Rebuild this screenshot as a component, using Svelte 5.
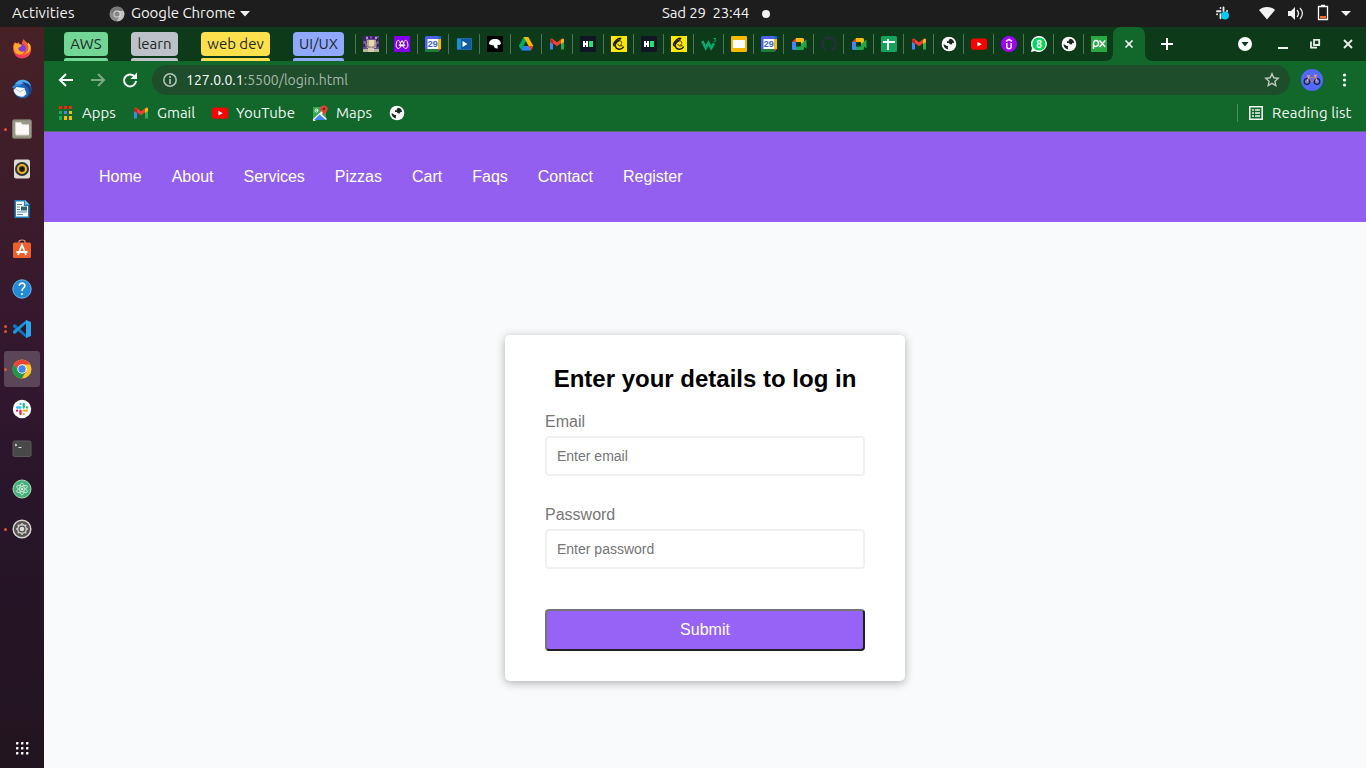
<script>
  const groups = [
    { name: 'AWS', color: '#72d697', width: 44, gap: 23, ls: 0.1 },
    { name: 'learn', color: '#bdc1c9', width: 47, gap: 23, ls: 0 },
    { name: 'web dev', color: '#fde04b', width: 69, gap: 23, ls: 0 },
    { name: 'UI/UX', color: '#90a8ff', width: 51, gap: 11, ls: 0 }
  ];
  const tabs = [
    'pixel', 'aurora', 'calendar', 'video', 'bird', 'drive', 'gmail', 'hacker',
    'chimp', 'hacker', 'chimp', 'w3', 'slides', 'calendar', 'meet', 'github', 'meet',
    'sheets', 'gmail', 'globe', 'youtube', 'udemy', 'whatsapp', 'globe', 'px'
  ];
  const dock = [
    { icon: 'firefox' }, { icon: 'thunderbird' }, { icon: 'files', dots: 1 },
    { icon: 'rhythmbox' }, { icon: 'writer' }, { icon: 'software' }, { icon: 'help' },
    { icon: 'vscode', dots: 2 }, { icon: 'chrome', dots: 1, active: true }, { icon: 'slack' },
    { icon: 'terminal' }, { icon: 'atom' }, { icon: 'settings', dots: 1 }
  ];
  const bookmarks = [
    { icon: 'apps', label: 'Apps', w: 76 },
    { icon: 'gmail', label: 'Gmail', w: 79 },
    { icon: 'youtube', label: 'YouTube', w: 100 },
    { icon: 'maps', label: 'Maps', w: 77 },
    { icon: 'globe', label: '', w: 16 }
  ];
  const links = ['Home', 'About', 'Services', 'Pizzas', 'Cart', 'Faqs', 'Contact', 'Register'];
  const spokes = [0, 45, 90, 135];
</script>

{#snippet small(name)}
  <svg width="16" height="16" viewBox="0 0 16 16">
    {#if name === 'pixel'}
      <path fill="#6b4b96" d="M0 0h16v16H0z" /><path fill="#42206f" d="M0 0h3v5H0zM5 0h2v3H5zM9 0h3v3H9zM13 2h3v4h-3zM0 8h2v3H0zM14 8h2v3h-2z" /><path fill="#a89bb5" d="M3 1h2v2H3zM12 1h2v2h-2z" />
      <path fill="#b5a794" d="M4 4h9v8H4z" /><path fill="#e3dcad" d="M6 4h5v6H6z" />
      <path fill="#b7b49e" d="M0 13h16v3H0z" /><path fill="#d5d0b4" d="M5 12h6v4H5z" /><path d="M1 5l3 5 3 2M15 5l-3 5-3 2" fill="none" stroke="#8c7b86" />
    {:else if name === 'aurora'}
      <path fill="#8500ef" d="M0 0h16v16H0z" />
      <g fill="none" stroke="#fff" stroke-width="1"><path d="M3 11.8C1.600 11 2 7 3 5.300c.8-1.300 2-1.300 2.700 0 1 1.700 1.300 4.500.3 6.200-.8 1.200-2 1.200-3 .3M13 11.800c1.400-.8 1-4.800 0-6.500-.8-1.300-2-1.300-2.700 0-1 1.700-1.300 4.500-.3 6.200.8 1.200 2 1.200 3 .3M5 10l3-5.500L11 10M6 6.500l2 4 2-4" /></g>
    {:else if name === 'calendar'}
      <rect width="16" height="16" rx="1.500" fill="#4b63e8" /><path fill="#fbbc04" d="M13 3h3v10h-3z" /><path fill="#1967d2" d="M13 0h2l1 1v2h-3z" />
      <path fill="#188038" d="M0 13h13v3H1l-1-1z" /><path fill="#fff" d="M2.500 3H13v10H2.500z" /><path fill="#ea4335" d="M13 13h3l-3 3z" /><path fill="#0d3b19" d="M16 13v3h-3z" />
      <text x="7.800" y="11.300" text-anchor="middle" font-size="9" font-weight="700" fill="#3367d6">29</text>
    {:else if name === 'video'}
      <rect y="2" x="1" width="15" height="12" rx="1" fill="#176caf" /><path fill="#1a91cf" d="M1 3h4v10H1z" /><path fill="#0f5b9d" d="M5 3h10v10H5z" /><path fill="#fff" d="M6.500 5l5 3-5 3z" />
    {:else if name === 'bird'}
      <path fill="#000" d="M0 0h16v16H0z" /><path fill="#fff" d="M2 8c0-3 2-5 6-5 4 .1 5.500 1.800 6 4.700L12.300 9l-1.900-.3.4 3.800C8 12.800 6.600 11 6.800 9.400L4 9z" />
    {:else if name === 'drive'}
      <path fill="#0da960" d="M5.600 1h2L8 5 3.300 14 .8 10z" /><path fill="#ffba00" d="M5.600 1h4.700l5 9h-4.600z" /><path fill="#2684fc" d="M5.400 10h5.400l-2 4.500H3.100z" /><path fill="#2684fc" d="M8 10.500h5v4H8z" /><path fill="#ea4335" d="M10.200 10h5.100L13 14.500z" />
    {:else if name === 'gmail'}
      <path fill="#4285f4" d="M1 4v9.500h3V7z" /><path fill="#34a853" d="M12 7v6.500h3V4z" /><path fill="#ea4335" d="M1 3l2-.5 5 3.800 5-3.800 2 .5v2L8 10.200 1 5z" /><path fill="#fbbc04" d="M12 4l2-1.500 1 1V6l-3 2z" /><path fill="#c5221f" d="M1 3l3 1v4L1 6z" />
    {:else if name === 'hacker'}
      <path fill="#101624" d="M0 0h16v16H0z" /><path fill="#fff" d="M3 5h2v2h1V5h2v6H6V9H5v2H3z" /><path fill="#20e66e" d="M9 5h4v6H9z" />
    {:else if name === 'chimp'}
      <path fill="#ffe800" d="M0 0h16v16H0z" /><path fill="none" stroke="#181711" stroke-width="1.400" d="M10.300 2.600C7.200 1.200 3 5.700 2.500 8.600c.2 1.200 1 1.400 1.800 1.300.7 4 6 4.700 8.400.7" /><path fill="#181711" d="M3 8c1-3 4-5 7-5L6 7l-2 3z" /><path d="M7.200 5.500c2-1.400 3.700-.7 3.500 2.200M6.500 8l2 2 3-.3M10 8v1" stroke="#181711" stroke-width=".9" fill="none" />
    {:else if name === 'w3'}
      <path d="M1.300 5l3.400 7 2.700-5.200 2.800 5.200L13 7.300" fill="none" stroke="#04aa6d" stroke-width="2.600" /><path d="M12.500 2.500h2.400l-1.100 1.600c2 .3 1 2.100-1.200 1.500" fill="none" stroke="#04aa6d" />
    {:else if name === 'slides'}
      <rect width="16" height="16" rx="1.300" fill="#f7b900" /><path fill="#fff" d="M2 4h12v8H2z" />
    {:else if name === 'meet'}
      <path fill="#ea4335" d="M1 6l4-4v4z" /><path fill="#fbbc04" d="M5 2h7l1 1v4l-3 2V6H5z" /><path fill="#4285f4" d="M1 6h4v8H2l-1-1z" /><path fill="#20a84a" d="M5 10.500h5V8l5.500-4.500v9L13 10.500V13l-1 1H5z" />
    {:else if name === 'github'}
      <path fill="#24313b" d="M8 0a8 8 0 0 0-2.500 15.600v-2.200C3 14 2.500 12 2.500 12c1 0 1.400 2 3.200 1.100.1-.7.4-1 .7-1.300C3.800 11.400 2.600 10 2.600 7.800c0-1 .4-1.900 1-2.500-.2-.8-.1-1.700.2-2.200 1 0 1.700.6 2.300 1a9 9 0 0 1 4 0c1.500-1 2.200-1 2.200-1 .4 1 .3 1.700.2 2.100.7.8 1 1.600 1 2.600 0 2.400-1.500 3.800-3.900 4 .5.500.8 1 .8 2v1.800A8 8 0 0 0 8 0" />
    {:else if name === 'sheets'}
      <rect width="16" height="16" rx="1.500" fill="#16a35b" /><path d="M2 6h12M7 3v11" stroke="#fff" stroke-width="2" />
    {:else if name === 'globe'}
      <circle cx="8" cy="8" r="7.300" fill="#fff" /><path fill="#1b2721" d="M2.500 8l3.300 1.900 1.500.1-.5 1.500.2 2C4.500 13 2.500 11 2.500 8M6 5.300h1.800V3.700l1.700-.9c2.100.6 3.400 2.200 3.700 3.900l-1.700.2-.8 1.500-2-.2-.8-1.100L6 7z" />
    {:else if name === 'youtube'}
      <rect y="2.500" width="16" height="11.300" rx="2.500" fill="#f00" /><path fill="#fff" d="M6.400 5.800l4.300 2.400-4.300 2.400z" />
    {:else if name === 'udemy'}
      <circle cx="8" cy="8" r="8" fill="#a100ff" /><path d="M5.800 7v3.500c0 3 4.400 3 4.400 0V7M5 5.300l3-2 3 2" fill="none" stroke="#fff" stroke-width="1.500" />
    {:else if name === 'whatsapp'}
      <path fill="#fff" d="M8 0a8 8 0 1 1-4 15L0 16l1-4A8 8 0 0 1 8 0" /><circle cx="8" cy="8" r="6.600" fill="#00d957" /><text x="8" y="11.600" text-anchor="middle" font-size="10" font-weight="700" fill="#fff">8</text>
    {:else if name === 'px'}
      <path fill="#28a745" d="M0 0h16v16H0z" /><path d="M2.500 13V7.500c0-4.300 5-3.800 5 0 0 3.300-3.500 3.400-5 2M8.500 4.500l5.800 6.500M14.300 4.500L8.500 11" fill="none" stroke="#fff" stroke-width="1.500" />
    {:else if name === 'apps'}
      <path fill="#ff1d0b" d="M2 1h3v3H2zM7 1h3v3H7zM12 1h3v3h-3z" /><path fill="#18a960" d="M2 6h3v3H2zM2 11h3v4H2z" /><path fill="#4285f4" d="M7 6h3v3H7z" /><path fill="#fbbc04" d="M12 6h3v3h-3zM12 11h3v4h-3zM7 11h3v4H7z" />
    {:else if name === 'maps'}
      <path fill="#34a853" d="M1 2h9l4 4v8L1 15z" /><path fill="#fff" d="M1 14L12 4l1.400 1.400L3 16H1z" /><path fill="#4285f4" d="M2 15l6-6 6 6z" /><path fill="#fff" d="M7 9l1.300-1.300L15 14l-1 1z" /><path fill="#ea4335" d="M8.200 4C8.200-.8 15.700-.8 15.700 4c0 2-2.500 3-3.500 7-.7-4-4-5-4-7" /><circle cx="12" cy="4" r="1.400" fill="#8c1a12" /><path d="M3 6c0-2 2-3 3-1M3 6c1 2 3 1 3-.5H4.500" fill="none" stroke="#fff" />
    {/if}
  </svg>
{/snippet}

{#snippet large(name)}
  <svg width="20" height="20" viewBox="0 0 20 20">
    {#if name === 'firefox'}
      <path fill="#ff5734" d="M1 8c0-2 1-4 2.200-5l.8 2L7 3c0 1.800 1.500 2.500 3 3 0-3 .4-4.700 2-6 0 2 3 3 3.800 5.200V3.600C20 7 20 13 16.800 16.600 11 22 .8 18.800 1 8" /><path fill="#ffc431" d="M12 0c-.2 3 4.200 4 4.500 8.500.3 3-2 6-5 6.500 5 0 8-4 6.800-9L16 3.600v1.900C15 3.500 12 2.500 12 0" /><circle cx="9.700" cy="9.500" r="4.400" fill="#823bdc" /><path fill="#ffac25" d="M3 4c2 0 3 1.400 5 1.600 2 0 2 2 0 2.300-1 .2-2 .8-1.700 1.800.6 3 4 3.800 6.200 2.300-2 5.500-8 3.800-10 .3C1.500 9 2 6 3 4" /><path fill="#fb326b" d="M2 13.500c4 4 11 4 15 .5C14 21.500 4.500 21 2 13.500" />
    {:else if name === 'thunderbird'}
      <circle cx="10.500" cy="10" r="9.200" fill="#1b62b7" /><path fill="#55a7ee" d="M3 5C7-1.500 17-.5 19 7c-4-4-9-3-13 0z" /><path fill="#143f84" d="M14 7c4 2 4 8 1 11 8-5 3-15-5-15z" /><path fill="#f2f8fb" d="M1.500 11l3-3 8 1 2 6-3 2.500c-4 1-9-1.500-10-6.500" /><path d="M3 9.500l5 3.500 5-3" stroke="#9ebbd0" stroke-width=".8" fill="none" /><path fill="#2f86d3" d="M0 9c1-4 7-5 10-2-3-.5-5 0-7 2z" />
    {:else if name === 'files'}
      <rect x=".5" y=".8" width="19" height="18.500" rx="1.500" fill="#9a9886" stroke="#77756c" /><path fill="#faf9f6" d="M4 4h5l1.500 1.500H17V16H4z" /><path d="M3.500 15V3.500H9l1 1.500M3.500 16h13" stroke="#d7d4cc" fill="none" />
    {:else if name === 'rhythmbox'}
      <rect x="2" y=".5" width="16" height="19" rx="2" fill="#dddcd5" /><circle cx="10" cy="10" r="7" fill="#30343a" /><circle cx="10" cy="10" r="4" fill="none" stroke="#edb817" stroke-width="2" /><circle cx="10" cy="10" r="2" fill="#151515" />
    {:else if name === 'writer'}
      <path fill="#1c81b8" d="M2.500 1H13l4.500 4.500V19h-15z" /><path fill="#fff" d="M4 2.500h8V7h4v10.500H4z" /><path fill="#79c5e6" d="M13 1l4.500 4.500H13z" /><path d="M5 5.500h5M5 8h3M5 10.500h3M5 13h10M5 15.500h6" stroke="#4689b0" /><path fill="#31617b" d="M9 7.500h6v4H9z" />
    {:else if name === 'software'}
      <path d="M7 4V2.500C7 .5 13 .5 13 2.500V4" fill="none" stroke="#dc9985" stroke-width="1.200" /><rect x="1" y="3.500" width="18" height="15.500" rx="1.500" fill="#ed602d" /><path d="M6 16l4-10 4 10M4.500 13h11" fill="none" stroke="#fff" stroke-width="1.800" />
    {:else if name === 'help'}
      <circle cx="10" cy="10" r="9.200" fill="#238ad8" stroke="#69b9ec" /><path d="M7.200 7c0-4 6-3.500 5.700-.3C12.800 9 10 9 10 12M10 14v2" fill="none" stroke="#fff" stroke-width="1.600" />
    {:else if name === 'vscode'}
      <path fill="#0876c2" d="M1 6l2-1 12.500 12-1 2L1 8z" /><path fill="#1b94dc" d="M1 14l2 1L15.500 3l-1-2L1 12z" /><path fill="#29a6ec" d="M14 1l5 2v14l-5 2z" /><path fill="#32162b" d="M14 6v8l-5-4z" />
    {:else if name === 'chrome'}
      <circle cx="10" cy="10" r="9.500" fill="#fbc62c" /><path fill="#ea4335" d="M10 10H6L1.800 5.200C5-.8 14.800-1 18.300 5.500H10z" /><path fill="#23944b" d="M1.800 5.200C-2.500 12 3 19 10 19.500l4-7.200L10 10H6z" /><circle cx="10" cy="10" r="4.700" fill="#fff" /><circle cx="10" cy="10" r="3.700" fill="#4285f4" />
    {:else if name === 'slack'}
      <circle cx="10" cy="10" r="9.200" fill="#fff" /><g fill="none" stroke-width="2.300" stroke-linecap="round"><path d="M8.500 5v.1M5 8.500h3.500" stroke="#36c5f0" /><path d="M11.700 5v3.500M15 8.500h.1" stroke="#2eb67d" /><path d="M11.700 11.700H15M11.700 15v.1" stroke="#ecb22e" /><path d="M8.500 11.700V15M5 11.700h.1" stroke="#e01e5a" /></g>
    {:else if name === 'terminal'}
      <rect x="1" y="2" width="18" height="15.500" rx="1.500" fill="#484848" stroke="#5a5a5a" /><path d="M3 5l2 1-2 1M6.500 8.500h3" fill="none" stroke="#ddd" stroke-width="1" />
    {:else if name === 'atom'}
      <circle cx="10" cy="10" r="9" fill="#46af80" stroke="#aad9a0" /><g fill="none" stroke="#d5ead1" stroke-width=".8">{#each [0, 60, 120] as angle}<ellipse cx="10" cy="10" rx="2.300" ry="6" transform={`rotate(${angle} 10 10)`} />{/each}</g><circle cx="10" cy="10" r="1" fill="#fff" />
    {:else if name === 'settings'}
      <circle cx="10" cy="10" r="8.800" fill="#54524f" stroke="#d7d5d2" stroke-width="1.500" />{#each spokes as angle}<path d="M10 4v12" stroke="#c7c5c1" stroke-width="1.700" transform={`rotate(${angle} 10 10)`} />{/each}<circle cx="10" cy="10" r="4.300" fill="#54524f" stroke="#ccc" stroke-width="1.500" /><circle cx="10" cy="10" r="2.300" fill="#ddd" />
    {/if}
  </svg>
{/snippet}

<div class="desktop">
  <header class="system">
    <div class="system-left"><span class="activities">Activities</span>
      <svg class="app-icon" width="16" height="16" viewBox="0 0 16 16"><circle cx="8" cy="8" r="7.500" fill="#8b8b8b" /><path fill="#777" d="M1.200 4.600C4-.7 12-.6 14.600 4.500H8L5 10z" /><path fill="#c3c3c3" d="M8 5h6.800c2 5-1.800 10.400-7 10.300L11 9z" /><circle cx="8" cy="8" r="3.600" fill="#ddd" /><circle cx="8" cy="8" r="2.600" fill="#858585" /></svg>
      <span class="app-name">Google Chrome</span><svg width="10" height="6" viewBox="0 0 10 6"><path fill="#f1f1f1" d="M0 0h10L5 5.500z" /></svg>
    </div>
    <div class="clock"><span>Sad 29&nbsp; 23:44</span><i></i></div>
    <svg class="tray" width="152" height="27" viewBox="0 0 152 27">
      <g stroke="#e7e7e7" stroke-width="1.900" stroke-linecap="round"><path d="M6.500 8v.1M3 11.200h3.500M9.500 7.500v3.500M13 11h.1M3 14.300h.1M6.500 14.300v4" /></g><circle cx="11" cy="15.500" r="4" fill="#00c9f2" />
      <path fill="#f2f2f2" d="M45 10c4-4 12-4 16 0l-8 9.500z" /><path fill="#f2f2f2" d="M74 11h3l4-4v13l-4-4h-3z" /><path d="M83 10q3 3.300 0 7M86 8q5 5.300 0 11" fill="none" stroke="#e8e8e8" stroke-width="1.300" />
      <path d="M104.500 6.500h9v13h-9zM107 5.500h4" fill="none" stroke="#fff" stroke-width="1.300" /><path fill="#f46b2c" d="M106 16h6v2.500h-6z" /><path fill="#f2f2f2" d="M127 11h10l-5 5z" />
    </svg>
  </header>

  <aside class="dock">
    {#each dock as item}
      <div class="dock-item" class:active={item.active}>
        <span class="marks">{#each Array(item.dots || 0) as _}<i></i>{/each}</span>{@render large(item.icon)}
      </div>
    {/each}
    <svg class="launcher" width="14" height="14" viewBox="0 0 14 14"><g fill="#fff">{#each [1, 6, 11] as x}{#each [1, 6, 11] as y}<rect {x} {y} width="2.400" height="2.400" rx=".4" />{/each}{/each}</g></svg>
  </aside>

  <main>
    <section class="strip">
      {#each groups as group}<div class="group" style={`width:${group.width}px;margin-right:${group.gap}px;--tone:${group.color};letter-spacing:${group.ls}px`}><span>{group.name}</span><i></i></div>{/each}
      {#each tabs as tab, index}<div class="tab" class:wide={index < 8}>{@render small(tab)}</div>{/each}
      <div class="current"><svg width="48" height="34" viewBox="0 0 48 34"><path fill="#12672b" d="M0 34c5 0 8-3 8-8V8c0-5 3-8 8-8h16c5 0 8 3 8 8v18c0 5 3 8 8 8z" /><path d="M20.500 13.500l7 7m0-7l-7 7" stroke="#fff" stroke-width="1.700" /></svg></div>
      <svg class="window-tools" width="213" height="34" viewBox="0 0 213 34"><path d="M8 17h12M14 11v12" stroke="#fff" stroke-width="2" /><circle cx="92" cy="17" r="7" fill="#fff" /><path fill="#0d3b19" d="M88.500 15h7l-3.500 4.500z" /><path d="M125 21h10M191 13l8 8m0-8l-8 8" stroke="#ebf0ed" stroke-width="1.800" /><path d="M161 12.800h5.200V18H161zM158 14.500v6.200h6" fill="none" stroke="#e5ece7" stroke-width="1.800" /></svg>
    </section>

    <section class="toolbar">
      <svg width="108" height="34" viewBox="0 0 108 34"><path d="M29 19H16m6-6l-6 6 6 6" fill="none" stroke="#fff" stroke-width="2" /><path d="M47 19h13m-6-6l6 6-6 6" fill="none" stroke="#7eaa8a" stroke-width="2" /><path d="M90.500 15.500A6 6 0 1 0 92 20" fill="none" stroke="#fff" stroke-width="2" /><path fill="#fff" d="M86.500 18H93v-6.500z" /></svg>
      <div class="address">
        <svg width="14" height="14" viewBox="0 0 14 14"><circle cx="7" cy="7" r="6.200" fill="none" stroke="#b6c5ba" stroke-width="1.500" /><path d="M7 6v5M7 3v2" stroke="#b6c5ba" stroke-width="1.700" /></svg>
        <span><b>127.0.0.1</b>:5500/login.html</span>
        <svg class="star" width="16" height="16" viewBox="0 0 16 16"><path d="M8 1.800l1.800 4 4.400.5-3.300 2.900.9 4.300L8 11.300l-3.800 2.200.9-4.300-3.300-2.900 4.400-.5z" fill="none" stroke="#bdcabf" stroke-width="1.400" /></svg>
      </div>
      <svg width="76" height="34" viewBox="0 0 76 34"><circle cx="22" cy="19" r="11" fill="#5368ff" /><g fill="#6e7cc9" stroke="#172040" stroke-width="1.200"><circle cx="17" cy="20.500" r="2.800" /><circle cx="27" cy="20.500" r="2.800" /></g><path d="M19 15.500l-2 5M25 14.500l2 6" stroke="#d9c0c4" /><path d="M19 17l3 4 4-5z" fill="none" stroke="#e0785b" /><path d="M17 15h3M24 14.500h3" fill="none" stroke="#e7a05b" stroke-width="1.300" /><g fill="#fff"><circle cx="54.500" cy="14" r="1.600" /><circle cx="54.500" cy="19" r="1.600" /><circle cx="54.500" cy="24" r="1.600" /></g></svg>
    </section>

    <section class="bookmarks">
      {#each bookmarks as mark}<div class="bookmark" style={`width:${mark.w}px`}>{@render small(mark.icon)}{#if mark.label}<span>{mark.label}</span>{/if}</div>{/each}
      <div class="reading"><svg width="14" height="14" viewBox="0 0 14 14"><path d="M.8.8h12.400v12.400H.8z" fill="none" stroke="#eff5f0" stroke-width="1.600" /><path d="M3 4h2m1 0h5M3 7h2m1 0h5M3 10h2m1 0h5" stroke="#eff5f0" stroke-width="1.300" /></svg><span>Reading list</span></div>
    </section>

    <nav>{#each links as link}<a href="#top">{link}</a>{/each}</nav>
    <div class="page">
      <form onsubmit={(event) => event.preventDefault()}>
        <h2>Enter your details to log in</h2>
        <label for="email">Email</label><input id="email" type="email" placeholder="Enter email" />
        <label for="password">Password</label><input id="password" type="password" placeholder="Enter password" />
        <button>Submit</button>
      </form>
    </div>
  </main>
</div>

<style>
  :global(body) { margin: 0; overflow: hidden; }
  * { box-sizing: border-box; }
  svg { display: block; flex: none; }
  .desktop { width: 1366px; height: 768px; display: grid; grid-template: 27px 741px / 44px 1322px; font: 15px "Ubuntu", "Noto Sans", sans-serif; overflow: hidden; }
  .system { grid-column: 1 / 3; display: grid; grid-template-columns: 662px 108px 1fr; background: #1d1d1d; color: #f2f2f2; height: 27px; }
  .system-left { display: flex; align-items: center; padding-left: 12px; white-space: nowrap; }
  .system span { line-height: 17px; padding-bottom: 2px; }
  .activities { width: 97px; letter-spacing: .1px; }
  .app-icon { margin-right: 6px; }
  .app-name { width: 109px; letter-spacing: -.05px; }
  .clock { display: flex; align-items: center; justify-content: space-between; white-space: nowrap; letter-spacing: -.15px; }
  .clock i { width: 8px; height: 8px; border-radius: 50%; background: #f2f2f2; }
  .tray { justify-self: end; }
  .dock { padding-top: 2px; background: linear-gradient(#472126, #32172f 46%, #28152a 65%, #22141e); display: flex; flex-direction: column; align-items: center; }
  .dock-item { height: 36px; width: 36px; margin: 2px 0; display: flex; align-items: center; border-radius: 3px; flex: none; }
  .dock-item.active { background: #5b4558; }
  .marks { width: 8px; display: flex; flex-direction: column; gap: 2px; }
  .marks i { width: 3px; height: 3px; border-radius: 50%; background: #e95420; }
  .launcher { margin: auto 0 13px; }
  main { background: #f9fafc; min-width: 0; }
  .strip { height: 34px; background: #0d3b19; padding-left: 20px; display: flex; overflow: hidden; }
  .group { height: 34px; padding-top: 5px; flex: none; color: #202a24; text-align: center; white-space: nowrap; }
  .group span { display: block; height: 24px; line-height: 24px; border-radius: 4px; background: var(--tone); }
  .group i { display: block; height: 3px; margin-top: 2px; background: var(--tone); border-radius: 2px 2px 0 0; }
  .tab { width: 30px; height: 20px; margin-top: 7px; padding-left: 7px; display: flex; align-items: center; border-left: 1px solid #4e7356; flex: none; }
  .tab.wide { width: 31px; }
  .tab text { font-family: "Liberation Sans", sans-serif; }
  .current { width: 48px; margin-left: -8px; flex: none; }
  .window-tools { flex: none; }
  .toolbar { height: 34px; background: #12672b; display: flex; }
  .address { width: 1138px; height: 30px; margin-top: 4px; border-radius: 15px; background: #1e4d2b; color: #a6b8aa; display: flex; align-items: center; padding: 0 10px 0 11px; font-size: 14px; }
  .address span { margin-left: 9px; }
  .address b { color: #fff; font-weight: 400; }
  .star { margin-left: auto; }
  .bookmarks { height: 37px; background: #12672b; color: #f0f6f1; display: flex; align-items: center; padding: 0 14px 0 13px; border-bottom: 1px solid #5a6f68; }
  .bookmark, .reading { height: 18px; display: flex; align-items: center; white-space: nowrap; }
  .bookmark span, .reading span { margin-left: 8px; line-height: 17px; padding-bottom: 2px; }
  .bookmark:first-child span { margin-left: 9px; }
  .reading { margin-left: auto; border-left: 1px solid #4a8a5c; padding-left: 11px; width: 115px; letter-spacing: .1px; }
  .reading span { margin-left: 9px; }
  nav { height: 90px; padding: 0 0 1px 55px; background: #935ff1; display: flex; align-items: center; gap: 30px; font: 16px "Liberation Sans", sans-serif; }
  nav a { color: #fff; text-decoration: none; line-height: 18px; }
  .page { height: 546px; padding: 113px 0 0 461px; font-family: "Liberation Sans", sans-serif; }
  form { width: 400px; height: 346px; padding: 30px 40px; border-radius: 5px; background: #fff; box-shadow: 0 2px 10px rgba(0, 0, 0, .3); display: flex; flex-direction: column; }
  h2 { margin: 0 0 20px; font-size: 24px; line-height: 28px; text-align: center; color: #000; white-space: nowrap; }
  form label { color: #777; font-size: 16px; line-height: 18px; margin-bottom: 5px; }
  input { width: 320px; height: 40px; border: 2px solid #f0f0f0; border-radius: 4px; padding: 10px; font: 14px "Liberation Sans", sans-serif; margin: 0 0 30px; }
  input::placeholder { color: #757575; }
  #password { margin-bottom: 40px; }
  button { height: 42px; padding: 10px; border: 2px solid; border-color: #767676 #212121 #212121 #767676; border-radius: 4px; color: #fff; background: #9663f6; font: 16px/18px "Liberation Sans", sans-serif; }
</style>
